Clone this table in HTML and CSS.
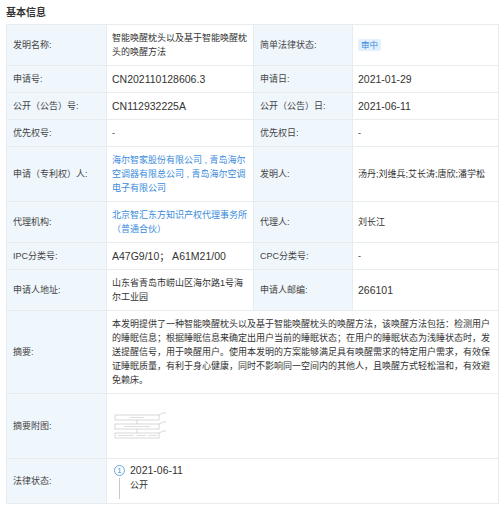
FILE: index.html
```html
<!DOCTYPE html>
<html lang="zh">
<head>
<meta charset="utf-8">
<link rel="stylesheet" href="styles.css">
</head>
<body>
<div class="page">
  <div class="title">基本信息</div>
  <table class="info">
    <colgroup><col class="c1"><col class="c2"><col class="c3"><col class="c4"></colgroup>
    <tr>
      <td class="lbl">发明名称:</td>
      <td>智能唤醒枕头以及基于智能唤醒枕头的唤醒方法</td>
      <td class="lbl">简单法律状态:</td>
      <td><span class="tag">审中</span></td>
    </tr>
    <tr>
      <td class="lbl">申请号:</td>
      <td class="num">CN202110128606.3</td>
      <td class="lbl">申请日:</td>
      <td class="num">2021-01-29</td>
    </tr>
    <tr>
      <td class="lbl">公开（公告）号:</td>
      <td class="num">CN112932225A</td>
      <td class="lbl">公开（公告）日:</td>
      <td class="num">2021-06-11</td>
    </tr>
    <tr>
      <td class="lbl">优先权号:</td>
      <td>-</td>
      <td class="lbl">优先权日:</td>
      <td>-</td>
    </tr>
    <tr>
      <td class="lbl">申请（专利权）人:</td>
      <td class="link">海尔智家股份有限公司 , 青岛海尔空调器有限总公司 , 青岛海尔空调电子有限公司</td>
      <td class="lbl">发明人:</td>
      <td>汤丹;刘维兵;艾长涛;唐欣;潘学松</td>
    </tr>
    <tr>
      <td class="lbl">代理机构:</td>
      <td class="link">北京智汇东方知识产权代理事务所（普通合伙）</td>
      <td class="lbl">代理人:</td>
      <td>刘长江</td>
    </tr>
    <tr>
      <td class="lbl">IPC分类号:</td>
      <td class="num">A47G9/10； A61M21/00</td>
      <td class="lbl">CPC分类号:</td>
      <td>-</td>
    </tr>
    <tr>
      <td class="lbl">申请人地址:</td>
      <td>山东省青岛市崂山区海尔路1号海尔工业园</td>
      <td class="lbl">申请人邮编:</td>
      <td class="num">266101</td>
    </tr>
    <tr>
      <td class="lbl">摘要:</td>
      <td colspan="3">本发明提供了一种智能唤醒枕头以及基于智能唤醒枕头的唤醒方法，该唤醒方法包括：检测用户的睡眠信息；根据睡眠信息来确定出用户当前的睡眠状态；在用户的睡眠状态为浅睡状态时，发送提醒信号，用于唤醒用户。使用本发明的方案能够满足具有唤醒需求的特定用户需求，有效保证睡眠质量，有利于身心健康，同时不影响同一空间内的其他人，且唤醒方式轻松温和，有效避免赖床。</td>
    </tr>
    <tr class="fig-row">
      <td class="lbl">摘要附图:</td>
      <td colspan="3">
        <svg class="fig" width="56" height="28" viewBox="0 0 56 28">
          <g fill="none" stroke="#b0b0b0" stroke-width="0.5">
            <rect x="1" y="3" width="44" height="5"/>
            <rect x="1" y="12" width="44" height="5"/>
            <rect x="1" y="21" width="44" height="5"/>
            <path d="M45 3 L49 1 L52 1"/>
            <path d="M45 12 L49 10 L52 10"/>
            <path d="M45 21 L49 19 L52 19"/>
            <path d="M23 8 V12 M23 17 V21"/>
          </g>
          <g stroke="#cfcfcf" stroke-width="0.7">
            <path d="M16 5.5 H30"/>
            <path d="M10 14.5 H36"/>
            <path d="M4 23.5 H20 M23 23.5 H32 M34 23.5 H43"/>
          </g>
        </svg>
      </td>
    </tr>
    <tr class="law-row">
      <td class="lbl">法律状态:</td>
      <td colspan="3">
        <div class="timeline">
          <div class="tl-mark">
            <span class="tl-dot">1</span>
            <span class="tl-line"></span>
          </div>
          <div class="tl-body">
            <div class="num">2021-06-11</div>
            <div>公开</div>
          </div>
        </div>
      </td>
    </tr>
  </table>
</div>
</body>
</html>
```

FILE: styles.css
```css
body {
  margin: 0;
  background: #fff;
  font-family: "Liberation Sans", "Noto Sans CJK SC", sans-serif;
  font-size: 9px;
  color: #333;
}
.page {
  padding: 6px 2px 0 6px;
}
.title {
  font-family: "Noto Sans CJK SC", sans-serif;
  font-weight: bold;
  font-size: 10px;
  line-height: 12px;
  color: #333;
  margin-bottom: 6px;
}
.info {
  border-collapse: collapse;
  table-layout: fixed;
  width: 492px;
}
.c1 { width: 100px; }
.c2 { width: 147px; }
.c3 { width: 99px; }
.c4 { width: 146px; }
.info td {
  border: 1px solid #e7ecf1;
  padding: 6px 3px 6px 5px;
  line-height: 14px;
  vertical-align: middle;
  word-break: break-all;
}
.info td.lbl {
  background: #eff6fc;
  color: #444;
  padding-left: 6px;
}
.num {
  font-size: 10.5px;
}
.link {
  color: #3a8bdb;
}
.tag {
  display: inline-block;
  background: #e2effc;
  color: #3a8bdb;
  font-size: 8.5px;
  line-height: 12px;
  padding: 0 3px;
  border-radius: 2px;
}
.fig-row td {
  height: 52px;
}
.fig {
  display: block;
  margin-left: 2px;
}
.law-row td {
  vertical-align: top;
  padding-top: 4px;
  padding-bottom: 4px;
}
.law-row td.lbl {
  vertical-align: middle;
}
.timeline {
  display: flex;
  gap: 5px;
}
.tl-mark {
  display: flex;
  flex-direction: column;
  align-items: center;
  width: 11px;
  margin-left: 2px;
}
.tl-dot {
  width: 9px;
  height: 9px;
  border: 1px solid #6aa8e0;
  border-radius: 50%;
  color: #4a94da;
  font-size: 8px;
  line-height: 9px;
  text-align: center;
  margin-top: 2px;
}
.tl-line {
  width: 1px;
  height: 21px;
  background: #c8c8c8;
  margin-top: 2px;
}
.tl-body {
  line-height: 15px;
}
```
